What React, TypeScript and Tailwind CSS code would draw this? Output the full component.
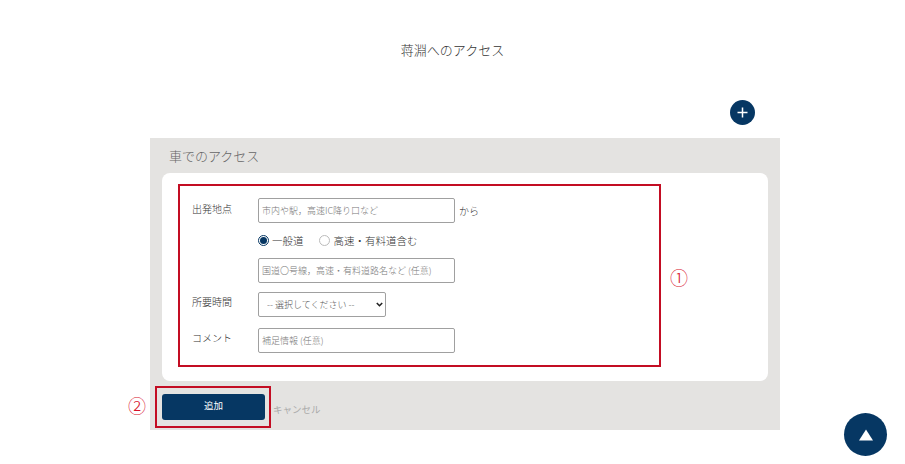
import React from "react";

const font = { fontFamily: '"Noto Sans CJK JP", "Liberation Sans", sans-serif' };

const inputClass =
  "h-[25px] w-[197px] rounded-[2px] border border-[#a0a0a0] bg-white px-[3px] text-[9px] font-light outline-none placeholder:text-[#777]";

const App: React.FC = () => {
  return (
    <div className="relative h-[464px] w-[905px] overflow-hidden bg-white font-light text-[#333]" style={font}>
      {/* Title */}
      <h1 className="pt-[40px] text-center text-[13px] font-light leading-[19px] text-[#333]">蒋淵へのアクセス</h1>

      {/* Add */}
      <div className="mt-[41px] flex justify-end pr-[150px]">
        <button className="flex h-[25px] w-[25px] items-center justify-center rounded-full bg-[#063763]">
          <svg width="11" height="11" viewBox="0 0 11 11">
            <path d="M5.5 0.5v10M0.5 5.5h10" stroke="#fff" strokeWidth="1.5" fill="none" />
          </svg>
        </button>
      </div>

      {/* Panel */}
      <div className="ml-[150px] mt-[13px] h-[292px] w-[630px] bg-[#e4e3e1] px-[12px]">
        <h2 className="h-[35px] pl-[7px] pt-[8px] text-[13px] font-light leading-[19px] text-[#666]">車でのアクセス</h2>

        <div className="h-[208px] w-[606px] rounded-[8px] bg-white pl-[16px] pt-[11px]">
          {/* Form */}
          <div className="relative h-[183px] w-[483px] border-2 border-[#c30d23] pl-[12px] pt-[12px]">
            <div className="flex">
              <label className="w-[66px] pt-[3px] text-[10px] leading-[15px]">出発地点</label>
              <input className={inputClass} placeholder="市内や駅，高速IC降り口など" />
              <span className="ml-[4px] pt-[5px] text-[10px] leading-[15px]">から</span>
            </div>

            <div className="ml-[66px] mt-[10px] flex h-[15px] items-center text-[10.5px]">
              <span className="flex h-[11px] w-[11px] items-center justify-center rounded-full border border-[#063763]">
                <span className="h-[7px] w-[7px] rounded-full bg-[#063763]" />
              </span>
              <span className="ml-[3px]">一般道</span>
              <span className="ml-[15px] h-[11px] w-[11px] rounded-full border border-[#bbb]" />
              <span className="ml-[4px]">高速・有料道含む</span>
            </div>

            <input className={`${inputClass} ml-[66px] mt-[10px] block`} placeholder="国道〇号線，高速・有料道路名など (任意)" />

            <div className="mt-[9px] flex">
              <label className="w-[66px] pt-[2px] text-[10px] leading-[15px]">所要時間</label>
              <div className="relative">
                <select className="block h-[25px] w-[128px] appearance-none rounded-[2px] border border-[#a0a0a0] bg-white pl-[8px] text-[9px] text-[#555]">
                  <option>-- 選択してください --</option>
                </select>
                <svg className="absolute right-[3px] top-[10px]" width="7" height="5" viewBox="0 0 7 5">
                  <path d="M0.8 1l2.7 2.7L6.2 1" stroke="#222" strokeWidth="1.6" fill="none" />
                </svg>
              </div>
            </div>

            <div className="mt-[11px] flex">
              <label className="w-[66px] pt-[2px] text-[10px] leading-[15px]">コメント</label>
              <input className={inputClass} placeholder="補足情報 (任意)" />
            </div>

            <span className="absolute left-[490px] top-[80px] text-[18px] leading-[22px] text-[#d7102a]">①</span>
          </div>
        </div>

        {/* Actions */}
        <div className="relative mt-[13px] flex items-end">
          <button className="h-[26px] w-[103px] rounded-[3px] bg-[#063763] pb-[3px] text-[9.5px] font-normal text-white">追加</button>
          <span className="mb-[3px] ml-[8px] text-[9.5px] font-normal leading-[15px] text-[#aaa]">キャンセル</span>
          <div className="absolute left-[-7px] top-[-8px] h-[42px] w-[116px] border-2 border-[#c30d23]" />
          <span className="absolute left-[-34px] top-[0px] text-[18px] leading-[22px] text-[#d7102a]">②</span>
        </div>
      </div>

      {/* Page top */}
      <button className="absolute left-[844px] top-[413px] flex h-[43px] w-[43px] items-center justify-center rounded-full bg-[#063763]">
        <svg width="14" height="12" viewBox="0 0 14 12">
          <path d="M7 0.5L14 11.5H0Z" fill="#fff" />
        </svg>
      </button>
    </div>
  );
};

export default App;
